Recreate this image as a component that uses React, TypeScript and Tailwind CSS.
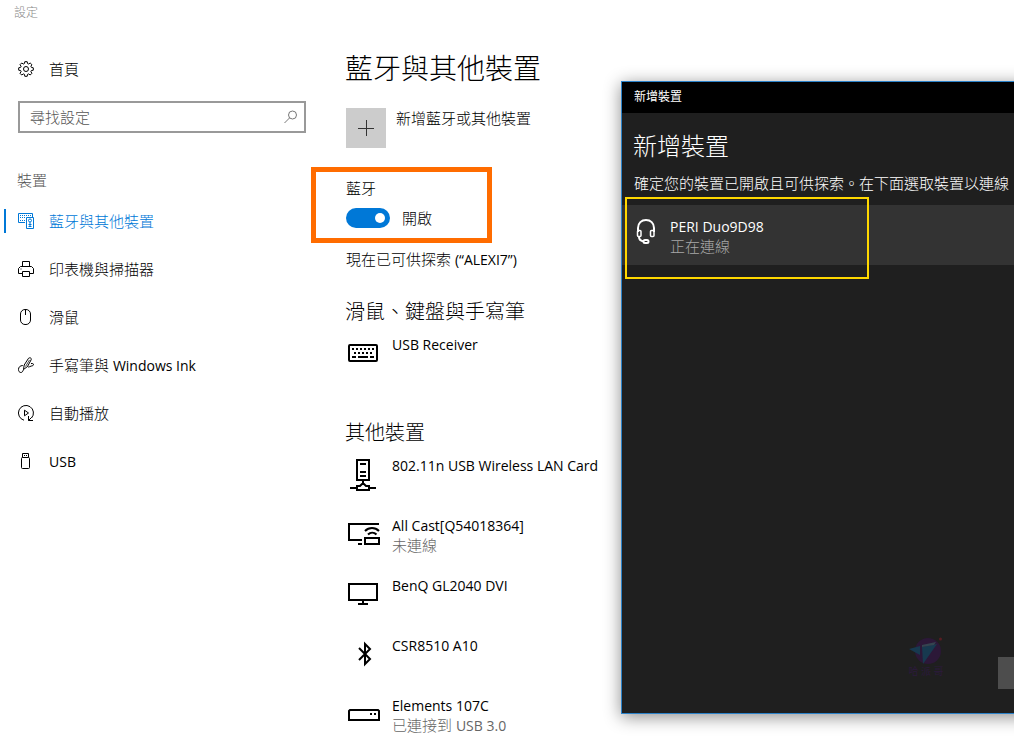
import { useState } from "react";
import type { ReactNode } from "react";

interface NavItem {
  label: ReactNode;
  icon: ReactNode;
  active?: boolean;
}

interface Device {
  name: string;
  status?: ReactNode;
  icon: ReactNode;
}

// Latin glyphs run larger and thinner than the CJK ones, so they get their own size and weight
const Latin = ({ children }: { children: ReactNode }) => <span className="text-[14px] font-normal">{children}</span>;

const GearIcon = () => (
  <svg width="16" height="16" viewBox="0 0 16 16" fill="none" stroke="currentColor" strokeWidth="1">
    <path d="M6.8.7h2.4l.4 1.9 1 .4 1.6-1 1.7 1.7-1 1.6.4 1 2 .5v2.4l-2 .4-.4 1 1 1.7-1.7 1.7-1.6-1.1-1 .4-.4 2H6.8l-.4-2-1-.4-1.7 1.1L2 12.3l1.1-1.7-.4-1-2-.4V6.8l2-.5.4-1L2 3.7 3.7 2l1.7 1 1-.4z" />
    <circle cx="8" cy="8" r="2.5" />
  </svg>
);

const SearchIcon = () => (
  <svg width="14" height="14" viewBox="0 0 14 14" fill="none" stroke="currentColor" strokeWidth="1">
    <circle cx="8.5" cy="5" r="4" />
    <path d="M5.6 7.9.5 13" />
  </svg>
);

const BluetoothDevicesIcon = () => (
  <svg width="16" height="16" viewBox="0 0 16 16" fill="none" stroke="currentColor">
    <path d="M7 9.5H.5v-9h14V4" />
    <path d="M2 2.5h11M2 4.5h6M2 7.5h5" strokeDasharray="1 1" />
    <path d="M8.5 4.5h7v11h-7z" />
    <circle cx="12" cy="7.5" r="1.5" />
    <path d="M10.5 11.5h3M12 9v5M10.5 13.5h3" />
  </svg>
);

const PrinterIcon = () => (
  <svg width="16" height="16" viewBox="0 0 16 16" fill="none" stroke="currentColor">
    <path d="M4.5 5.5v-5h7v5" />
    <path d="M4 12.5H.5v-5l2-2h11l2 2v5H12" />
    <path d="M4.5 10.5h7v5h-7zM2.5 8h1" />
  </svg>
);

const MouseIcon = () => (
  <svg width="16" height="16" viewBox="0 0 16 16" fill="none" stroke="currentColor">
    <rect x="2.5" y=".5" width="10" height="15" rx="4.5" />
    <path d="M7.5 1v5" />
  </svg>
);

const PenIcon = () => (
  <svg width="16" height="16" viewBox="0 0 16 16" fill="none" stroke="currentColor" strokeLinejoin="round">
    <path d="M5.5 12.5 6.2 8 10.500 1.300c.8-.9 3.400-.7 2.700 1.400L9.500 9.500z" />
    <path d="M7.500 9.500 11.500 3" strokeWidth=".7" />
    <path d="M4.800 8.500C2 8.600.5 10.200.5 12.500c0 1.800 1 3 2.300 3 1.400 0 2-1 2.700-3" />
    <path d="M9.500 9.500c.5.800 1.500.5 2.500 0 1.500-.7 3.500-.5 3.500-2 0-1-1-1-2.500-1" />
  </svg>
);

const AutoPlayIcon = () => (
  <svg width="16" height="16" viewBox="0 0 16 16" fill="none" stroke="currentColor">
    <path d="M6 15.200A7.500 7.500 0 1 1 13.500 13" />
    <path d="M10.500 11v4.500h4.500M10.500 15.500l3-3" />
    <path d="M6.500 5.200v5.600L10.500 8z" />
  </svg>
);

const UsbIcon = () => (
  <svg width="16" height="16" viewBox="0 0 16 16" fill="none" stroke="currentColor">
    <path d="M4.500 4.500v-4h6v4M6 2.500h1M8 2.500h1" />
    <rect x="3.500" y="4.500" width="8" height="11" rx="1" />
  </svg>
);

const KeyboardIcon = () => (
  <svg width="34" height="34" viewBox="0 0 34 34" fill="none" stroke="currentColor" strokeWidth="2">
    <rect x="1" y="9" width="28" height="16" rx="1" />
    <path d="M4 13h22M6 17h20" strokeDasharray="2 2" />
    <path d="M4 21h4M10 21h10M22 21h4" />
  </svg>
);

const NetworkIcon = () => (
  <svg width="34" height="34" viewBox="0 0 34 34" fill="none" stroke="currentColor" strokeWidth="2">
    <path d="M9 3h12v20H9zM12 7h6M12 15h6M12 19h6" />
    <path d="M15 23v4M2 31h6M22 31h6M9 33v-4h3l2-2h2l2 2h3v4z" />
  </svg>
);

const CastIcon = () => (
  <svg width="34" height="34" viewBox="0 0 34 34" fill="none" stroke="currentColor" strokeWidth="2">
    <path d="M31 7H1v16h13M10 27h4" />
    <path d="M17 21h14v6H17z" />
    <path d="M17 14c4-4 10-4 14 0M20 17.500c2.500-2.500 6-2.500 8.500 0" />
  </svg>
);

const MonitorIcon = () => (
  <svg width="34" height="34" viewBox="0 0 34 34" fill="none" stroke="currentColor" strokeWidth="2">
    <path d="M1 7h28v16H1zM15 23v4M10 27h10" />
  </svg>
);

const BluetoothIcon = () => (
  <svg width="34" height="34" viewBox="0 0 34 34" fill="none" stroke="currentColor" strokeWidth="2">
    <path d="m11 11 11 11-5 5V7l5 5-11 11" />
  </svg>
);

const DriveIcon = () => (
  <svg width="34" height="34" viewBox="0 0 34 34" fill="none" stroke="currentColor" strokeWidth="2">
    <path d="M1 23v-9l1-1h28l1 1v9z" />
    <path d="M22 17h2M26 17h2" />
  </svg>
);

const HeadsetIcon = () => (
  <svg width="20" height="26" viewBox="0 0 20 26" fill="none" stroke="currentColor" strokeWidth="2">
    <path d="M2 13V9c0-5 3.500-8 8-8s8 3 8 8v4" />
    <rect x="1.500" y="11.500" width="3.500" height="6" rx="1" strokeWidth="1.500" />
    <rect x="14.500" y="11.500" width="3.500" height="6" rx="1" strokeWidth="1.500" />
    <path d="M3 18c0 3 2 4 5 4.500" />
    <rect x="7.500" y="21" width="5" height="3" rx="1.500" />
  </svg>
);

const navItems: NavItem[] = [
  { label: "藍牙與其他裝置", icon: <BluetoothDevicesIcon />, active: true },
  { label: "印表機與掃描器", icon: <PrinterIcon /> },
  { label: "滑鼠", icon: <MouseIcon /> },
  { label: <>手寫筆與 <Latin>Windows Ink</Latin></>, icon: <PenIcon /> },
  { label: "自動播放", icon: <AutoPlayIcon /> },
  { label: <Latin>USB</Latin>, icon: <UsbIcon /> },
];

const inputDevices: Device[] = [{ name: "USB Receiver", icon: <KeyboardIcon /> }];

const otherDevices: Device[] = [
  { name: "802.11n USB Wireless LAN Card", icon: <NetworkIcon /> },
  { name: "All Cast[Q54018364]", status: "未連線", icon: <CastIcon /> },
  { name: "BenQ GL2040 DVI", icon: <MonitorIcon /> },
  { name: "CSR8510 A10", icon: <BluetoothIcon /> },
  { name: "Elements 107C", status: <>已連接到 <Latin>USB 3.0</Latin></>, icon: <DriveIcon /> },
];

function Sidebar() {
  return (
    <aside className="w-[346px] shrink-0">
      <p className="h-[25px] pl-3.5 text-[12px] leading-[26px] text-[#888]">設定</p>
      <a href="#home" className="mt-5 flex h-12 items-center gap-[15px] pl-[18px]">
        <GearIcon />
        首頁
      </a>
      <div className="mt-2 mr-10 ml-[18px] flex h-8 items-center border-2 border-[#999] pr-1.5 pl-2.5">
        <input
          type="search"
          aria-label="尋找設定"
          placeholder="尋找設定"
          className="min-w-0 flex-1 bg-transparent outline-none placeholder:text-[#555]"
        />
        <button type="button" aria-label="搜尋" className="text-[#777]">
          <SearchIcon />
        </button>
      </div>
      <h2 className="mt-8 h-8 pl-[17px] leading-[30px] text-[#555]">裝置</h2>
      <nav>
        {navItems.map((item, index) => (
          <a
            key={index}
            href="#devices"
            className={`flex h-12 items-center pl-1 ${item.active ? "text-[#0078d7]" : "text-black"}`}
          >
            <span className={`mr-3 h-6 w-0.5 ${item.active ? "bg-[#0078d7]" : ""}`} />
            {item.icon}
            <span className="ml-[15px]">{item.label}</span>
          </a>
        ))}
      </nav>
    </aside>
  );
}

function DeviceList({ devices }: { devices: Device[] }) {
  return (
    <ul>
      {devices.map((device) => (
        <li key={device.name} className="flex h-[60px] gap-3 leading-5">
          <span className="w-[34px] pt-px pl-0.5">{device.icon}</span>
          <div>
            <p className="text-[14px] leading-5 font-normal">{device.name}</p>
            {device.status && <p className="leading-[18px] text-[#666]">{device.status}</p>}
          </div>
        </li>
      ))}
    </ul>
  );
}

function BluetoothToggle() {
  const [enabled, setEnabled] = useState(true);

  return (
    <section className="mt-[19px] -ml-[35px] h-[76px] w-[181px] border-[5px] border-[#ff6c00] pt-1.5 pl-[30px]">
      <h2 className="leading-5">藍牙</h2>
      <label className="mt-2.5 flex h-5 items-center gap-3">
        <input
          type="checkbox"
          role="switch"
          checked={enabled}
          onChange={(e) => setEnabled(e.target.checked)}
          className="flex h-5 w-11 appearance-none items-center rounded-full bg-[#999] px-[5px] before:size-2.5 before:rounded-full before:bg-white checked:justify-end checked:bg-[#0078d7]"
        />
        {enabled ? "開啟" : "關閉"}
      </label>
    </section>
  );
}

function Watermark() {
  return (
    <div className="flex flex-col items-center">
      <svg width="36" height="28" viewBox="0 0 36 28">
        <circle cx="20" cy="14" r="13" fill="#2c1838" />
        <path d="M1 12 12 9v9z" fill="#17394f" />
        <path d="M14 10 29 7 15 27z" fill="#17394f" />
        <path d="m14 8 14-3-2 3-12 2z" fill="#354450" />
        <circle cx="32.500" cy="2" r="1.500" fill="#571d22" />
      </svg>
      <span className="text-[10px] leading-3 font-normal text-[#2c1a3c]">哈 派 哥</span>
    </div>
  );
}

function AddDeviceDialog() {
  return (
    <div
      role="dialog"
      aria-label="新增裝置"
      className="absolute top-[81px] left-[621px] flex min-h-[633px] w-[480px] flex-col border border-[#2b82c9] bg-[#1f1f1f] text-white shadow-[0_3px_16px_rgba(0,0,0,0.45)]"
    >
      <p className="h-[31px] bg-black pl-3 text-[12px] leading-[30px] font-normal">新增裝置</p>
      <h2 className="mt-[17px] pl-[11px] text-[24px] leading-8">新增裝置</h2>
      <p className="mt-[11px] pl-3 leading-5 whitespace-nowrap">確定您的裝置已開啟且可供探索。在下面選取裝置以連線</p>
      <button type="button" className="relative mt-3 flex h-[60px] w-full gap-3.5 bg-[#333] pl-3.5 text-left leading-5">
        <span className="pt-3.5">
          <HeadsetIcon />
        </span>
        <span className="pt-3">
          <span className="block text-[14px] leading-5 font-normal">PERI Duo9D98</span>
          <span className="block leading-[18px] text-[#a8a8a8]">正在連線</span>
        </span>
        <span className="absolute -top-2 left-[3px] h-[82px] w-[244px] border-2 border-[#ffd800]" />
      </button>
      <div className="mt-auto mb-6 flex items-end justify-between pr-[11px] pl-[286px]">
        <div className="mb-3">
          <Watermark />
        </div>
        <button type="button" aria-label="取消" className="h-8 w-[91px] bg-[#4d4d4d]" />
      </div>
    </div>
  );
}

export default function App() {
  return (
    <div className="relative flex h-screen overflow-hidden bg-white font-['Open_Sans','Noto_Sans_CJK_TC',sans-serif] text-[15px] font-light text-black">
      <Sidebar />
      <main className="flex-1">
        <h1 className="-ml-px pt-12 text-[28px] leading-10">藍牙與其他裝置</h1>
        <button type="button" className="mt-5 flex gap-2.5 text-left leading-5">
          <span className="flex size-10 items-center justify-center bg-[#ccc]">
            <svg width="16" height="16" viewBox="0 0 16 16" stroke="#333" strokeWidth="1">
              <path d="M0 8.500h16M8.500 0v16" />
            </svg>
          </span>
          新增藍牙或其他裝置
        </button>
        <BluetoothToggle />
        <p className="mt-1.5 leading-5">
          現在已可供探索 <Latin>(“ALEXI7”)</Latin>
        </p>
        <section className="mt-7">
          <h2 className="mb-[9px] -ml-px text-[20px] leading-7">滑鼠、鍵盤與手寫筆</h2>
          <DeviceList devices={inputDevices} />
        </section>
        <section className="mt-6">
          <h2 className="mb-[9px] -ml-px text-[20px] leading-7">其他裝置</h2>
          <DeviceList devices={otherDevices} />
        </section>
      </main>
      <AddDeviceDialog />
    </div>
  );
}
